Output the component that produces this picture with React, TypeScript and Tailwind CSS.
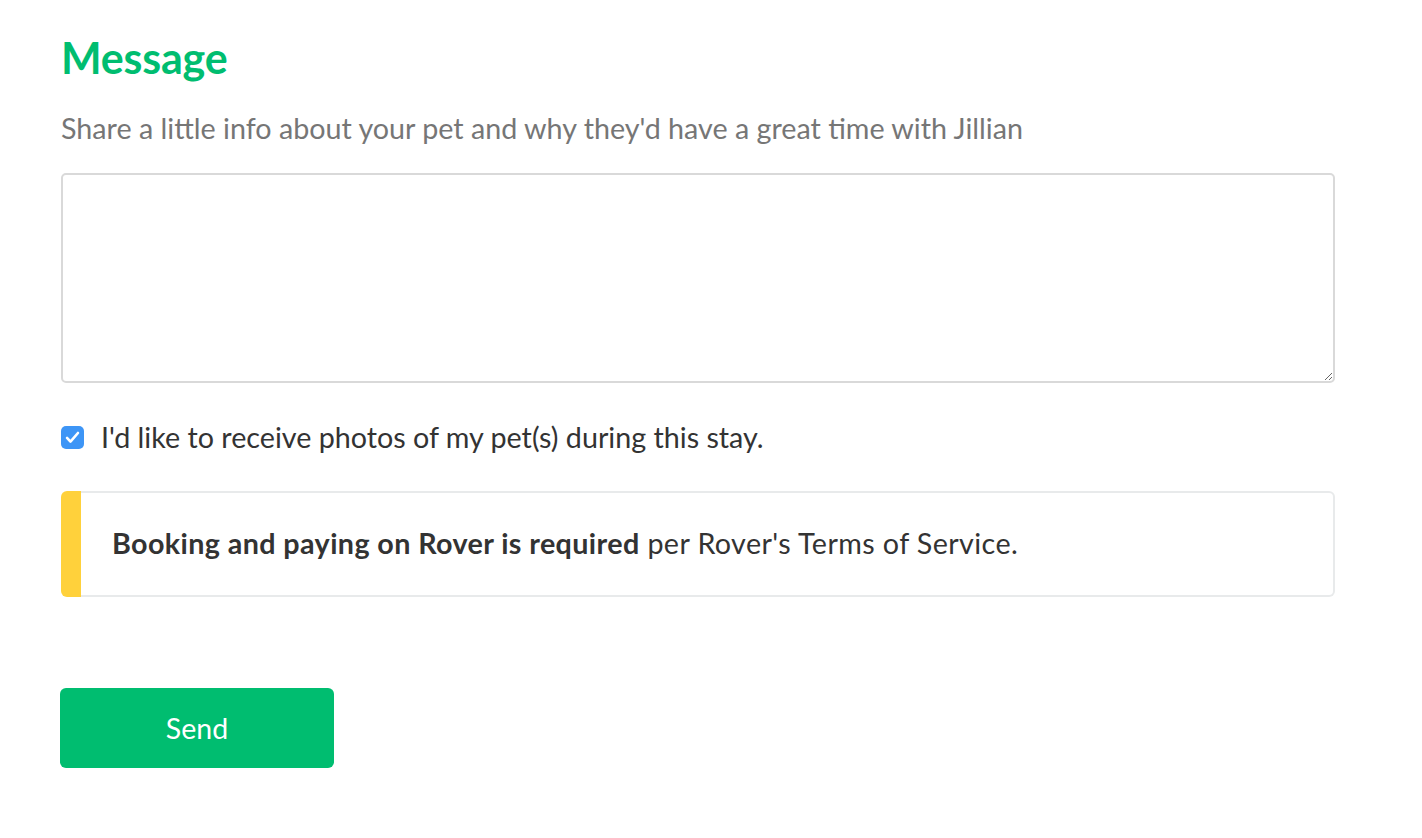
import React, { useState } from 'react';

const App: React.FC = () => {
  const [photos, setPhotos] = useState(true);

  return (
    <div className="min-h-screen bg-white" style={{ fontFamily: 'Lato, "Noto Sans", sans-serif' }}>
      <div className="pl-[61px] pr-[87px] pt-[34px]">
        {/* Header */}
        <h2 className="text-[43px] font-bold leading-[48px] tracking-[-0.2px] text-[#00bd70]">Message</h2>
        <p className="mt-[28px] text-[28.7px] leading-[36px] text-[#767676]">
          Share a little info about your pet and why they'd have a great time with Jillian
        </p>

        {/* Textarea */}
        <textarea
          className="mt-[27px] block h-[210px] w-full resize-y rounded-[5px] border-2 border-[#d9d9d9] p-3 text-[24px] text-[#333] outline-none"
        />

        {/* Checkbox */}
        <label className="mt-[41px] flex h-[26px] items-center gap-[17px]">
          <span
            onClick={() => setPhotos(!photos)}
            className={`flex h-[23px] w-[23px] shrink-0 items-center justify-center rounded-[5px] ${photos ? 'bg-[#3d95f6]' : 'border-2 border-[#ccc] bg-white'}`}
          >
            {photos && (
              <svg width="19" height="19" viewBox="0 0 16 16" fill="none">
                <path d="M3.4 8.4l2.9 3.1L12.6 4.2" stroke="white" strokeWidth="2.2" strokeLinecap="round" strokeLinejoin="round" />
              </svg>
            )}
          </span>
          <span className="text-[28.7px] leading-[26px] text-[#333]">
            I'd like to receive photos of my pet(s) during this stay.
          </span>
        </label>

        {/* Notice */}
        <div className="mt-[41px] flex h-[106px]">
          <div className="w-[20px] shrink-0 rounded-l-[6px] bg-[#ffd13b]" />
          <div className="flex flex-1 items-center rounded-r-[6px] border-y-2 border-r-2 border-[#e8eaeb] pl-[31px] text-[28.7px] tracking-[0.4px] text-[#333]">
            <span>
              <span className="font-bold">Booking and paying on Rover is required</span> per Rover's Terms of Service.
            </span>
          </div>
        </div>

        {/* Button */}
        <button className="-ml-px mt-[91px] flex h-[80px] w-[274px] items-center justify-center rounded-[6px] bg-[#00bd70] text-[28.5px] text-white">
          Send
        </button>
      </div>
    </div>
  );
};

export default App;
